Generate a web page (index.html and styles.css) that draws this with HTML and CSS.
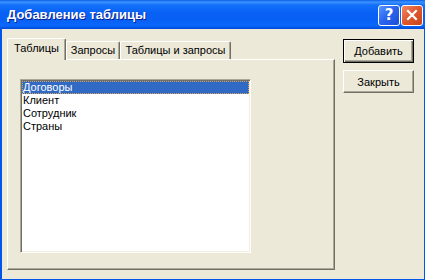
FILE: index.html
```html
<!DOCTYPE html>
<html lang="ru">
<head>
    <meta charset="UTF-8">
    <title>Добавление таблицы</title>
    <link rel="stylesheet" href="styles.css">
</head>
<body>
    <div class="window">
        <div class="titlebar">
            <span class="title">Добавление таблицы</span>
            <div class="caption-buttons">
                <div class="cap-btn help">?</div>
                <div class="cap-btn close">
                    <svg width="12" height="12" viewBox="0 0 12 12">
                        <path d="M2 2 L10 10 M10 2 L2 10" stroke="#fff" stroke-width="2.2" stroke-linecap="square" fill="none"/>
                    </svg>
                </div>
            </div>
        </div>

        <div class="client">
            <div class="left-col">
                <div class="tabs">
                    <div class="tab tab-active tab-w1">Таблицы</div>
                    <div class="tab tab-w2">Запросы</div>
                    <div class="tab tab-w3">Таблицы и запросы</div>
                </div>
                <div class="panel">
                    <ul class="listbox">
                        <li class="item selected">Договоры</li>
                        <li class="item">Клиент</li>
                        <li class="item">Сотрудник</li>
                        <li class="item">Страны</li>
                    </ul>
                </div>
            </div>

            <div class="buttons">
                <div class="btn btn-default">Добавить</div>
                <div class="btn">Закрыть</div>
            </div>
        </div>
    </div>
</body>
</html>
```

FILE: styles.css
```css
body {
    margin: 0;
    padding: 0;
    font-family: 'Liberation Sans', Arial, sans-serif;
    font-size: 11px;
    color: #000;
}

.window {
    width: 425px;
    height: 280px;
    display: flex;
    flex-direction: column;
    background: #0055ea;
}

.titlebar {
    height: 29px;
    display: flex;
    align-items: center;
    background: linear-gradient(180deg, #0a5ee6 0%, #3c92ff 7%, #1270fa 18%, #0860f4 45%, #0860f4 70%, #0a68fc 88%, #004ad9 100%);
}

.title {
    padding-left: 7px;
    padding-bottom: 1px;
    color: #fff;
    font-family: 'Liberation Sans', Arial, sans-serif;
    font-weight: bold;
    font-size: 13px;
    text-shadow: 1px 1px #0a1e8c;
}

.caption-buttons {
    margin-left: auto;
    margin-right: 2px;
    display: flex;
    gap: 1px;
    padding-top: 1px;
}

.cap-btn {
    width: 22px;
    height: 21px;
    box-sizing: border-box;
    border: 1px solid #fff;
    border-radius: 3px;
    display: flex;
    align-items: center;
    justify-content: center;
    color: #fff;
    font-family: 'DejaVu Sans', sans-serif;
    font-weight: bold;
    font-size: 15px;
}

.help {
    background: linear-gradient(135deg, #5b97ff 0%, #2b66f0 45%, #1a4fd8 100%);
}

.close {
    background: linear-gradient(135deg, #f08a68 0%, #e05a30 45%, #c9441a 100%);
}

.client {
    flex: 1;
    margin: 0 1px 1px 2px;
    background: #ece9d8;
    display: flex;
    padding: 9px 0 0 5px;
}

.left-col {
    width: 328px;
}

.tabs {
    height: 21px;
    display: flex;
    align-items: flex-end;
}

.tab {
    height: 18px;
    box-sizing: border-box;
    border-top: 1px solid #fff;
    border-left: 1px solid #fff;
    border-right: 1px solid #716f64;
    box-shadow: inset -1px 0 #aca899;
    border-radius: 2px 2px 0 0;
    text-align: center;
    line-height: 16px;
    background: #ece9d8;
}

.tab-active {
    height: 22px;
    margin-bottom: -1px;
    position: relative;
    z-index: 1;
    line-height: 19px;
}

.tab-w1 { width: 59px; }
.tab-w2 { width: 54px; }
.tab-w3 { width: 111px; }

.panel {
    height: 211px;
    box-sizing: border-box;
    border-top: 1px solid #fff;
    border-left: 1px solid #fff;
    border-right: 1px solid #716f64;
    border-bottom: 1px solid #716f64;
    box-shadow: inset -1px -1px #aca899;
    padding: 19px 0 0 12px;
}

.listbox {
    width: 231px;
    height: 174px;
    box-sizing: border-box;
    margin: 0;
    padding: 1px;
    list-style: none;
    background: #fff;
    border: 1px solid;
    border-color: #aca899 #fff #fff #aca899;
    box-shadow: inset 1px 1px #716f64, inset -1px -1px #f1efe2;
}

.item {
    height: 13px;
    line-height: 13px;
    padding-left: 1px;
}

.selected {
    background: #316ac5;
    color: #fff;
    outline: 1px dotted #d9a35a;
    outline-offset: -1px;
}

.buttons {
    margin-left: 8px;
    margin-top: 1px;
    display: flex;
    flex-direction: column;
    gap: 7px;
}

.btn {
    width: 71px;
    height: 23px;
    box-sizing: border-box;
    border-top: 1px solid #fff;
    border-left: 1px solid #fff;
    border-right: 1px solid #716f64;
    border-bottom: 1px solid #716f64;
    box-shadow: inset -1px -1px #aca899;
    display: flex;
    align-items: center;
    justify-content: center;
    background: #ece9d8;
}

.btn-default {
    height: 24px;
    border: 1px solid #000;
    box-shadow: inset 1px 1px #fff, inset -1px -1px #716f64, inset -2px -2px #aca899;
}
```
